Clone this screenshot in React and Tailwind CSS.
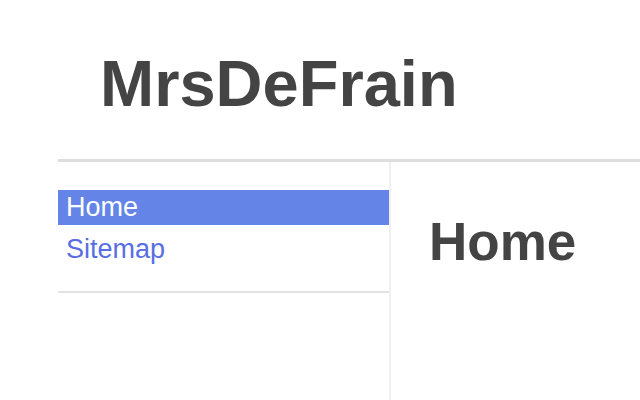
import React from 'react'

const links = [
  { label: 'Home', active: true },
  { label: 'Sitemap', active: false },
]

export default function App() {
  return (
    <div
      className="w-[640px] h-[400px] overflow-hidden bg-white pl-[58px]"
      style={{ fontFamily: '"Liberation Sans", Arial, sans-serif' }}
    >
      {/* site header */}
      <header className="h-[159px] pt-[51px] pl-[42px]">
        <h1 className="text-[65px] leading-none font-bold text-[#444]">MrsDeFrain</h1>
      </header>

      <div className="flex border-t-[3px] border-[#dedede] h-[241px]">
        {/* left navigation */}
        <nav className="w-[333px] border-r-2 border-[#f0f0f0] self-stretch">
          <div className="pt-[28px] pb-[24px] border-b-2 border-[#e2e2e2] flex flex-col gap-[7px]">
            {links.map((l) => (
              <a
                key={l.label}
                href="#"
                className={
                  l.active
                    ? 'block h-[35px] leading-[35px] pl-[8px] text-[27px] text-white bg-[#6484e8]'
                    : 'block h-[35px] leading-[35px] pl-[8px] text-[27px] text-[#5a6ee4]'
                }
              >
                {l.label}
              </a>
            ))}
          </div>
        </nav>

        {/* page content */}
        <main className="flex-1 pl-[38px] pt-[53px]">
          <h2 className="text-[53px] leading-none font-bold text-[#444]">Home</h2>
        </main>
      </div>
    </div>
  )
}
